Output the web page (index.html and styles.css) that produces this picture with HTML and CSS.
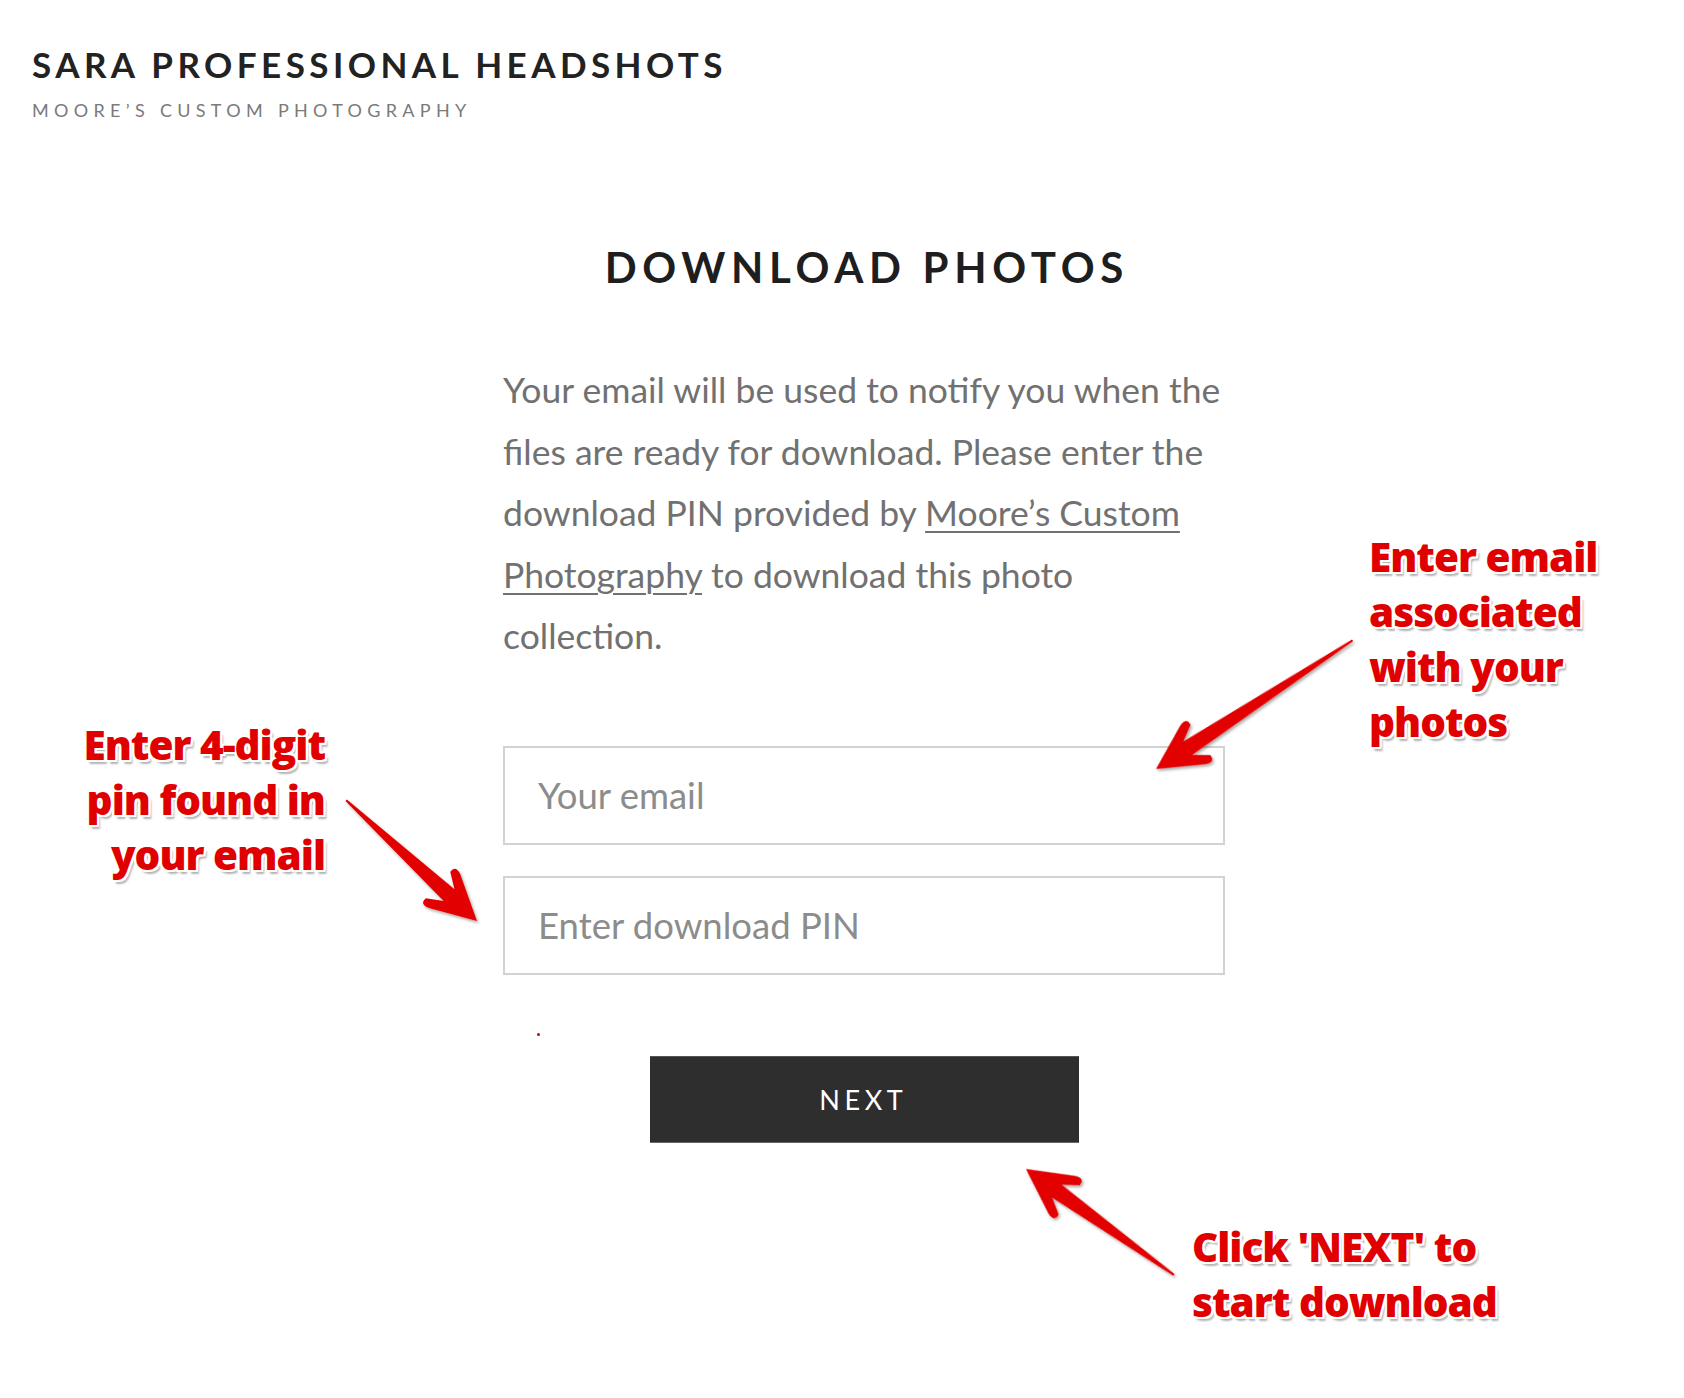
FILE: index.html
```html
<!DOCTYPE html>
<html lang="en">
<head>
<meta charset="utf-8">
<title>Download Photos - Sara Professional Headshots</title>
<link rel="stylesheet" href="styles.css">
</head>
<body>
<header class="site-header">
  <div class="site-title">SARA PROFESSIONAL HEADSHOTS</div>
  <div class="site-subtitle">MOORE’S CUSTOM PHOTOGRAPHY</div>
</header>

<main class="content">
  <h1 class="page-title">DOWNLOAD PHOTOS</h1>
  <p class="intro">Your email will be used to notify you when the files are ready for download. Please enter the download PIN provided by <a href="#">Moore’s Custom Photography</a> to download this photo collection.</p>
  <form class="dl-form">
    <input class="field" type="email" placeholder="Your email">
    <input class="field" type="text" placeholder="Enter download PIN">
    <span class="stray-mark"></span>
    <button class="next-btn" type="button">NEXT</button>
  </form>
</main>

<div class="note note-pin">Enter 4-digit<br>pin found in<br>your email</div>
<div class="note note-email">Enter email<br>associated<br>with your<br>photos</div>
<div class="note note-next">Click 'NEXT' to<br>start download</div>

<svg class="arrows" width="1684" height="1398" viewBox="0 0 1684 1398" aria-hidden="true">
  <defs>
    <filter id="ash" x="-20%" y="-40%" width="140%" height="180%">
      <feDropShadow dx="1.5" dy="2" stdDeviation="1.5" flood-color="#000" flood-opacity="0.35"/>
    </filter>
  </defs>
  <g filter="url(#ash)" fill="#e20000">
    <g transform="translate(477,921) rotate(42.7)">
      <path d="M0,0 L-44,-23 Q-54,-27 -53,-18 L-38,-8 L-178,-1 L-178,1 L-38,8 L-53,18 Q-54,27 -44,23 Z"/>
    </g>
    <g transform="translate(1156,769) rotate(146.8)">
      <path d="M0,0 L-44,-23 Q-54,-27 -53,-18 L-38,-8 L-235,-1 L-235,1 L-38,8 L-53,18 Q-54,27 -44,23 Z"/>
    </g>
    <g transform="translate(1026,1169) rotate(-144.4)">
      <path d="M0,0 L-44,-23 Q-54,-27 -53,-18 L-38,-8 L-182,-1 L-182,1 L-38,8 L-53,18 Q-54,27 -44,23 Z"/>
    </g>
  </g>
</svg>
</body>
</html>
```

FILE: styles.css
```css
* { box-sizing: border-box; }

html, body {
  margin: 0;
  padding: 0;
  background: #ffffff;
}

body {
  position: relative;
  width: 1684px;
  min-height: 1398px;
  font-family: "Lato", "Liberation Sans", sans-serif;
  color: #222;
  overflow: hidden;
}

.site-header {
  padding: 44px 0 0 32px;
}

.site-title {
  font-family: "Lato", "Liberation Sans", sans-serif;
  font-weight: 700;
  font-size: 35px;
  line-height: 40px;
  letter-spacing: 0.127em;
  color: #222222;
}

.site-subtitle {
  margin-top: 16px;
  font-family: "Lato", "Liberation Sans", sans-serif;
  font-weight: 400;
  font-size: 18px;
  line-height: 20px;
  letter-spacing: 0.295em;
  color: #7a7a7a;
}

.content {
  width: 722px;
  margin-left: 503px;
}

.page-title {
  margin: 123px 0 0 0;
  text-align: center;
  font-family: "Lato", "Liberation Sans", sans-serif;
  font-weight: 700;
  font-size: 42px;
  line-height: 48px;
  letter-spacing: 0.135em;
  padding-left: 0.135em;
  color: #1e1e1e;
}

.intro {
  margin: 68px 0 0 0;
  font-family: "Lato", "Liberation Sans", sans-serif;
  font-weight: 400;
  font-size: 35.5px;
  line-height: 61.5px;
  color: #717171;
}

.intro a {
  color: #717171;
  text-decoration: underline;
  text-decoration-thickness: 2px;
  text-underline-offset: 5px;
}

.dl-form {
  display: flex;
  flex-direction: column;
  margin-top: 79px;
}

.field {
  display: block;
  width: 722px;
  height: 99px;
  margin: 0 0 31px 0;
  padding: 0 0 0 33px;
  border: 2px solid #d2d2d2;
  border-radius: 0;
  background: #fff;
  font-family: "Lato", "Liberation Sans", sans-serif;
  font-size: 36.5px;
  color: #333;
  outline: none;
}

.field::placeholder {
  color: #8c8c8c;
}

.stray-mark {
  display: block;
  width: 3px;
  height: 3px;
  margin: 27px 0 0 34px;
  background: #d40000;
  border-radius: 50%;
}

.next-btn {
  align-self: center;
  width: 429px;
  height: 87px;
  margin-top: 20px;
  border: none;
  border-top: 1px solid #555;
  border-bottom: 1px solid #666;
  background: #2e2e2e;
  color: #ffffff;
  font-family: "Lato", "Liberation Sans", sans-serif;
  font-size: 27px;
  letter-spacing: 0.17em;
  padding-left: 0.17em;
  cursor: pointer;
}

.note {
  position: absolute;
  font-family: "Open Sans", "Liberation Sans", sans-serif;
  font-weight: 800;
  font-size: 40.5px;
  line-height: 55px;
  color: #e10000;
  letter-spacing: -0.025em;
  text-shadow:
    2px 0 0 #fff, -2px 0 0 #fff, 0 2px 0 #fff, 0 -2px 0 #fff,
    2px 2px 0 #fff, -2px -2px 0 #fff, 2px -2px 0 #fff, -2px 2px 0 #fff,
    3px 4px 2px rgba(0, 0, 0, 0.3);
}

.note-pin {
  right: 1359px;
  top: 717px;
  text-align: right;
}

.note-email {
  left: 1369px;
  top: 529px;
}

.note-next {
  left: 1192px;
  top: 1219px;
}

.arrows {
  position: absolute;
  left: 0;
  top: 0;
  pointer-events: none;
}
```
